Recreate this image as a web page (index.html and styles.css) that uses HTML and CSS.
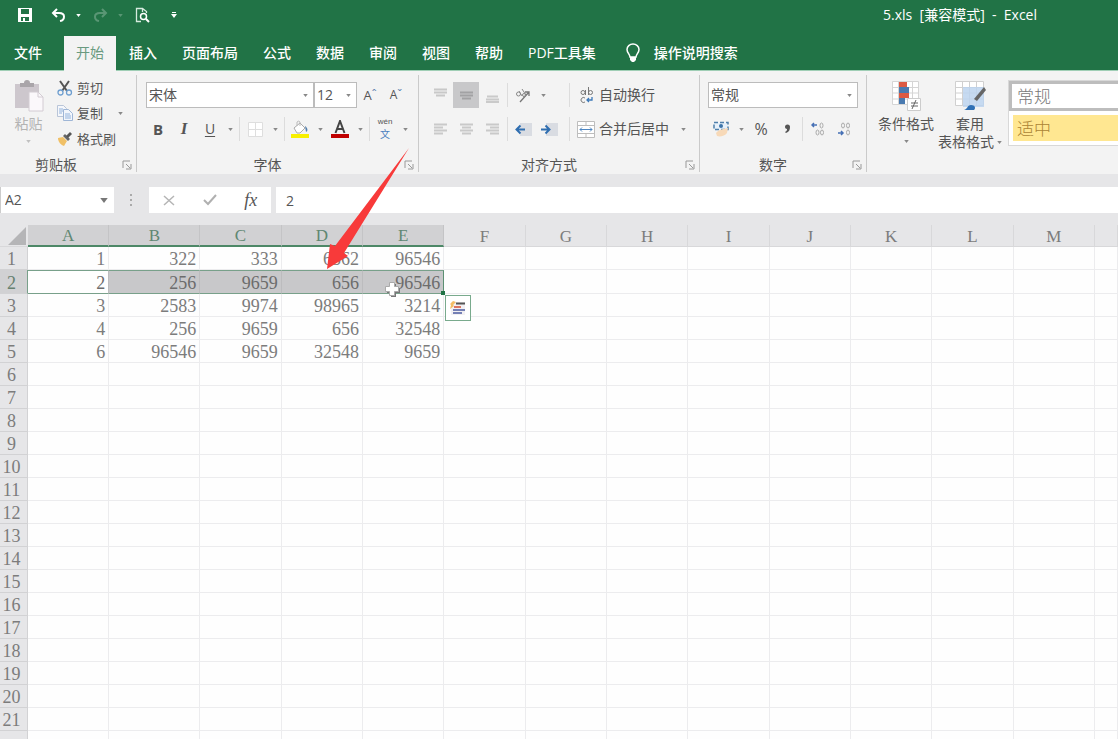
FILE: index.html
```html
<!DOCTYPE html>
<html lang="zh-CN">
<head>
<meta charset="utf-8">
<title>5.xls [兼容模式] - Excel</title>
<link rel="stylesheet" href="styles.css">
</head>
<body>
<svg class="defs" width="0" height="0" aria-hidden="true">
  <symbol id="caret" viewBox="0 0 6 4"><path d="M0 0h6L3 4z" fill="currentColor"/></symbol>
  <symbol id="launcher" viewBox="0 0 10 10"><path d="M1 8V1h7M4 4l4 4M9 4v5H4" fill="none" stroke="currentColor"/></symbol>
</svg>

<header class="titlebar">
  <div class="quick">
    <button class="tool" aria-label="保存"><svg width="14" height="14" viewBox="0 0 14 14"><path d="M0 0h14v14H0z" fill="#fff"/><path d="M3 1h8v5H3zM3 9h8v4H3z" fill="#217346"/><path d="M5 10h2v3H5z" fill="#fff"/></svg></button>
    <div class="split undo"><button class="tool" aria-label="撤消"><svg width="15" height="14" viewBox="0 0 15 14"><path d="M6 1L2 5l4 4M2 5h6c7 0 6 7 1 8" fill="none" stroke="#fff" stroke-width="2"/></svg></button><button class="drop" aria-label="撤消选项"><svg width="5" height="3"><use href="#caret"/></svg></button></div>
    <div class="split dim"><button class="tool" aria-label="重做"><svg width="15" height="14" viewBox="0 0 15 14"><path d="M9 1l4 4-4 4M13 5H7C0 5 1 12 6 13" fill="none" stroke="#fff" stroke-width="2"/></svg></button><button class="drop" aria-label="重做选项"><svg width="5" height="3"><use href="#caret"/></svg></button></div>
    <button class="tool" aria-label="打印预览"><svg width="15" height="16" viewBox="0 0 15 16"><path d="M6 14.500H1.500V1.500h6l4 3V6M7.500 1.500V5" fill="none" stroke="#d6ebdf" stroke-width="1.300"/><circle cx="8.500" cy="9.500" r="3" fill="none" stroke="#fff" stroke-width="1.500"/><path d="M11 12l3 3" stroke="#fff" stroke-width="2"/></svg></button>
    <button class="drop customize" aria-label="自定义快速访问工具栏"><svg width="6" height="6" viewBox="0 0 6 6"><path d="M1 0h4v1H1zM0 2h6L3 6z" fill="#fff"/></svg></button>
  </div>
  <h1 class="title">5.xls  [兼容模式]  -  Excel</h1>
</header>

<nav class="tabs">
  <button class="tab file">文件</button>
  <button class="tab active">开始</button>
  <button class="tab">插入</button>
  <button class="tab">页面布局</button>
  <button class="tab">公式</button>
  <button class="tab">数据</button>
  <button class="tab">审阅</button>
  <button class="tab">视图</button>
  <button class="tab">帮助</button>
  <button class="tab">PDF工具集</button>
  <button class="tell"><svg width="14" height="20" viewBox="0 0 14 20"><path d="M4 14c0-3-3-4-3-7.500a6 5.500 0 0 1 12 0C13 10 10 11 10 14z" fill="none" stroke="#fff" stroke-width="1.500"/><path d="M4 14h6v3l-2 2H6l-2-2z" fill="#fff"/></svg>操作说明搜索</button>
</nav>

<section class="ribbon">
  <div class="group clipboard">
    <div class="clip-body">
      <button class="big paste">
        <svg width="30" height="32" viewBox="0 0 30 32"><path d="M1 4h24v24H1z" fill="#cdc7cd"/><path d="M6 3h4a3 3 0 0 1 6 0h4v4H6z" fill="#a9a5a9"/><path d="M15 12h9l5 5v14H15z" fill="#fbf8fb" stroke="#d3ccd3"/><path d="M24 12v5h5" fill="none" stroke="#d3ccd3"/></svg>
        <span>粘贴</span>
        <svg width="5" height="3"><use href="#caret"/></svg>
      </button>
      <div class="stack">
        <button class="cmd"><svg width="16" height="16" viewBox="0 0 16 16"><path d="M3 1l7 10M12 1L5 11" stroke="#555" stroke-width="2"/><circle cx="3.500" cy="12.500" r="2.500" fill="none" stroke="#6f9fd0" stroke-width="1.300"/><circle cx="12" cy="12.500" r="2.500" fill="none" stroke="#6f9fd0" stroke-width="1.300"/></svg>剪切</button>
        <div class="split"><button class="cmd"><svg width="16" height="16" viewBox="0 0 16 16"><path d="M.5.500h6l3 3v8h-9z" fill="#f5f7fb" stroke="#b9c5d8"/><path d="M6.500 4.500h5l4 4v7h-9z" fill="#f2f6fc" stroke="#9fb6d6"/><path d="M8 9h5M8 11h6M8 13h6M2 4h4M2 6h4M2 8h3" stroke="#93b3dc"/></svg>复制</button><button class="drop" aria-label="复制选项"><svg width="5" height="3"><use href="#caret"/></svg></button></div>
        <button class="cmd"><svg width="16" height="16" viewBox="0 0 16 16"><path d="M1 7l5-1 4 4-3 5c-3-1-6-4-6-8z" fill="#f0c067"/><path d="M6 5l5 5 2-2-5-5z" fill="#666"/><path d="M9 5l4-4 2 2-4 4z" fill="#555"/></svg>格式刷</button>
      </div>
    </div>
    <div class="group-label">剪贴板<button class="launch" aria-label="剪贴板设置"><svg width="10" height="10"><use href="#launcher"/></svg></button></div>
  </div>

  <div class="group font">
    <div class="rows">
      <div class="row">
        <span class="combo name"><select aria-label="字体"><option>宋体</option></select><svg width="5" height="3"><use href="#caret"/></svg></span>
        <span class="combo size"><select aria-label="字号"><option>12</option></select><svg width="5" height="3"><use href="#caret"/></svg></span>
        <button class="tool grow" aria-label="增大字号">A<sup>ˆ</sup></button>
        <button class="tool shrink" aria-label="减小字号">A<sup>ˇ</sup></button>
      </div>
      <div class="row">
        <button class="tool bold">B</button><button class="tool italic">I</button><button class="tool underline">U</button><button class="drop" aria-label="下划线选项"><svg width="5" height="3"><use href="#caret"/></svg></button>
        <i class="sep"></i>
        <button class="tool" aria-label="边框"><svg width="15" height="15" viewBox="0 0 15 15"><path d="M.5.500h14v14H.5zM7.500 0v15M0 7.500h15" fill="#fff" stroke="#dedede"/></svg></button><button class="drop" aria-label="边框选项"><svg width="5" height="3"><use href="#caret"/></svg></button>
        <i class="sep"></i>
        <button class="tool" aria-label="填充颜色"><svg width="18" height="18" viewBox="0 0 18 18"><path d="M3 8l6-5 5 5-5 5H6z" fill="#fff" stroke="#aaa"/><path d="M6 6V2a2 2 0 0 1 3 0v4" fill="none" stroke="#bbb"/><path d="M14 6c3 2 3 5 1 6z" fill="#527fae"/><path d="M0 14h18v4H0z" fill="#f8f000"/></svg></button><button class="drop" aria-label="填充颜色选项"><svg width="5" height="3"><use href="#caret"/></svg></button>
        <button class="tool" aria-label="字体颜色"><svg width="18" height="18" viewBox="0 0 18 18"><path d="M4.500 13L9 1l4.500 12M6 9h6" fill="none" stroke="#444" stroke-width="2"/><path d="M0 14h18v4H0z" fill="#c00000"/></svg></button><button class="drop" aria-label="字体颜色选项"><svg width="5" height="3"><use href="#caret"/></svg></button>
        <i class="sep"></i>
        <button class="tool phonetic" aria-label="显示拼音"><small>wén</small><b>文</b></button><button class="drop" aria-label="拼音选项"><svg width="5" height="3"><use href="#caret"/></svg></button>
      </div>
    </div>
    <div class="group-label">字体<button class="launch" aria-label="字体设置"><svg width="10" height="10"><use href="#launcher"/></svg></button></div>
  </div>

  <div class="group align">
    <div class="rows">
      <div class="row">
        <button class="tool" aria-label="顶端对齐"><svg width="13" height="15" viewBox="0 0 13 15"><path d="M0 1.500h13M0 4.500h13M2 7.500h9" stroke="#c8c8c8" stroke-width="2"/></svg></button><button class="tool pressed" aria-label="垂直居中"><svg width="13" height="15" viewBox="0 0 13 15"><path d="M0 4.500h13M0 7.500h13M2 10.500h9" stroke="#a2a2a4" stroke-width="2"/></svg></button><button class="tool" aria-label="底端对齐"><svg width="13" height="15" viewBox="0 0 13 15"><path d="M1 8.500h11M0 11.500h13M0 14h13" stroke="#cacaca" stroke-width="2"/></svg></button>
        <i class="sep"></i>
        <span class="pair"><button class="tool" aria-label="方向"><svg width="17" height="15" viewBox="0 0 17 15"><path d="M5 14L14 4M10 4h4v4" fill="none" stroke="#777" stroke-width="1.300"/><circle cx="3.500" cy="6" r="2" fill="none" stroke="#888"/><path d="M4 3l3 5M7 1l4 6" stroke="#888"/><circle cx="9" cy="7" r="1.500" fill="none" stroke="#888"/></svg></button><button class="drop" aria-label="方向选项"><svg width="5" height="3"><use href="#caret"/></svg></button></span>
        <i class="sep wide"></i>
        <button class="cmd wrap"><svg width="20" height="17" viewBox="0 0 20 17"><circle cx="7" cy="5.500" r="2" fill="none" stroke="#777"/><path d="M9.500 3v5M12.500 0v8" stroke="#777"/><circle cx="14.500" cy="5.500" r="2" fill="none" stroke="#777"/><path d="M9 11a2.500 2.500 0 1 0 0 4" fill="none" stroke="#777"/><path d="M16 10v3h-5m2-2l-2 2 2 2" fill="none" stroke="#3d79b8" stroke-width="1.300"/></svg>自动换行</button>
      </div>
      <div class="row">
        <button class="tool" aria-label="左对齐"><svg width="13" height="13" viewBox="0 0 13 13"><path d="M0 1.500h13M0 4.500h9M0 7.500h13M0 10.500h9" stroke="#c9c9c9" stroke-width="2"/></svg></button><button class="tool" aria-label="居中"><svg width="13" height="13" viewBox="0 0 13 13"><path d="M0 1.500h13M2 4.500h9M0 7.500h13M2 10.500h9" stroke="#c9c9c9" stroke-width="2"/></svg></button><button class="tool" aria-label="右对齐"><svg width="13" height="13" viewBox="0 0 13 13"><path d="M0 1.500h13M4 4.500h9M0 7.500h13M4 10.500h9" stroke="#c9c9c9" stroke-width="2"/></svg></button>
        <i class="sep"></i>
        <span class="pair"><button class="tool" aria-label="减少缩进量"><svg width="17" height="13" viewBox="0 0 17 13"><path d="M5 0h12v13H5z" fill="#d9dce2"/><path d="M10 6.500H2M5.500 2.500l-4 4 4 4" fill="none" stroke="#2f6eb0" stroke-width="2"/></svg></button><button class="tool" aria-label="增加缩进量"><svg width="17" height="13" viewBox="0 0 17 13"><path d="M5 0h12v13H5z" fill="#d9dce2"/><path d="M0 6.500h8M4.500 2.500l4 4-4 4" fill="none" stroke="#2f6eb0" stroke-width="2"/></svg></button></span>
        <i class="sep wide"></i>
        <button class="cmd merge"><svg width="20" height="17" viewBox="0 0 20 17"><path d="M1.500.500h17v16h-17zM1 4.500h18M1 12.500h18M10 0v4M10 13v4" fill="#fff" stroke="#bdbdbd"/><path d="M4 8.500h12M6 6.500l-2 2 2 2M14 6.500l2 2-2 2" fill="none" stroke="#4d86c2"/></svg>合并后居中</button><button class="drop" aria-label="合并选项"><svg width="5" height="3"><use href="#caret"/></svg></button>
      </div>
    </div>
    <div class="group-label">对齐方式<button class="launch" aria-label="对齐设置"><svg width="10" height="10"><use href="#launcher"/></svg></button></div>
  </div>

  <div class="group number">
    <div class="rows">
      <div class="row"><span class="combo format"><select aria-label="数字格式"><option>常规</option></select><svg width="5" height="3"><use href="#caret"/></svg></span></div>
      <div class="row">
        <button class="tool" aria-label="会计数字格式"><svg width="17" height="16" viewBox="0 0 17 16"><path d="M1 1.500h14v7H1z" fill="#e6f0fa" stroke="#4f7fab" stroke-width="1.500" stroke-dasharray="4 2"/><circle cx="8" cy="5" r="2" fill="#3d73a8"/><path d="M3 12c3-4 8-4 12-5l-1 5c-2 3-7 4-10 3z" fill="#f7d9b8"/></svg></button><button class="drop" aria-label="会计格式选项"><svg width="5" height="3"><use href="#caret"/></svg></button><button class="tool percent">%</button><button class="tool comma" aria-label="千位分隔样式"><svg width="7" height="11" viewBox="0 0 7 11"><path d="M1 3a2.500 2.500 0 1 1 5 0c0 3-1 5-4 6l-1-1c2-1 2-2 2-3-1 0-2-1-2-2z" fill="#555"/></svg></button>
        <i class="sep"></i>
        <button class="tool" aria-label="增加小数位数"><svg width="14" height="14" viewBox="0 0 14 14"><path d="M6 3H1M3 1L1 3l2 2" fill="none" stroke="#4670b5" stroke-width="1.500"/><g fill="none" stroke="#aaa"><ellipse cx="10.500" cy="3.500" rx="1.500" ry="2.500"/><ellipse cx="6.500" cy="10.500" rx="1.500" ry="2.500"/><ellipse cx="11" cy="10.500" rx="1.500" ry="2.500"/></g></svg></button><button class="tool" aria-label="减少小数位数"><svg width="14" height="14" viewBox="0 0 14 14"><path d="M1 11h5M4 9l2 2-2 2" fill="none" stroke="#4670b5" stroke-width="1.500"/><g fill="none" stroke="#aaa"><ellipse cx="6" cy="3.500" rx="1.500" ry="2.500"/><ellipse cx="11" cy="3.500" rx="1.500" ry="2.500"/><ellipse cx="11" cy="10.500" rx="1.500" ry="2.500"/></g></svg></button>
      </div>
    </div>
    <div class="group-label">数字<button class="launch" aria-label="数字设置"><svg width="10" height="10"><use href="#launcher"/></svg></button></div>
  </div>

  <div class="group styles">
    <button class="big">
      <svg width="30" height="32" viewBox="0 0 30 32"><path d="M1.500 1.500h26v23h-26zM1 7.500h27M1 13h27M1 19h27M7.500 1v24M21.500 1v24" fill="#fff" stroke="#d5d5d5"/><path d="M8 2h8v5H8zM8 13h10v5H8z" fill="#dd5a43"/><path d="M8 7h10v6H8zM8 18h6v6H8z" fill="#4a7ab0"/><path d="M16.500 18.500h13v12h-13z" fill="#fff" stroke="#ccc"/><path d="M20 23h7M20 26h7M25 20l-4 9" stroke="#666"/></svg>
      <span>条件格式</span>
      <svg width="5" height="3"><use href="#caret"/></svg>
    </button>
    <button class="big">
      <svg width="32" height="32" viewBox="0 0 32 32"><path d="M1.500 1.500h28v24h-28zM1 7.500h29M1 13h29M1 19h29M8.500 1v25M15.500 1v25M22.500 1v25" fill="#fff" stroke="#d0d0d0"/><path d="M9 7h21v20H9z" fill="#bcd3ee" opacity=".85"/><path d="M30 7l2 3-9 11-3-2z" fill="#666"/><path d="M10 30c4-1 3-5 7-5s5 3 3 5z" fill="#2f70b5"/></svg>
      <span>套用</span>
      <span class="with-caret">表格格式<svg width="5" height="3"><use href="#caret"/></svg></span>
    </button>
    <div class="gallery">
      <button class="style normal">常规</button>
      <button class="style neutral">适中</button>
    </div>
  </div>
</section>

<section class="formula">
  <div class="namebox"><input aria-label="名称框" value="A2"><button class="drop" aria-label="名称列表"><svg width="8" height="5"><use href="#caret"/></svg></button></div>
  <svg class="dots" width="3" height="12" viewBox="0 0 3 12"><path d="M0 0h2v2H0zM0 5h2v2H0zM0 10h2v2H0z" fill="#aaa"/></svg>
  <div class="fx">
    <button aria-label="取消"><svg width="12" height="11" viewBox="0 0 12 11"><path d="M1 1l10 9M11 1L1 10" stroke="#b5b5b5" stroke-width="1.500"/></svg></button>
    <button aria-label="输入"><svg width="14" height="12" viewBox="0 0 14 12"><path d="M1 6l4 4 8-9" fill="none" stroke="#b0b0b0" stroke-width="2"/></svg></button>
    <button class="fn">fx</button>
  </div>
  <input class="content" aria-label="编辑栏" value="2">
</section>

<main class="sheet">
  <table class="grid">
    <colgroup><col class="c-head"><col><col class="c-b"><col><col><col><col><col><col><col><col><col><col><col><col class="c-last"></colgroup>
    <thead><tr><th class="corner"><svg width="18" height="18" viewBox="0 0 18 18"><path d="M18 0v18H0z" fill="#b5b5b7"/></svg></th><th class="on">A</th><th class="on">B</th><th class="on">C</th><th class="on">D</th><th class="on">E</th><th>F</th><th>G</th><th>H</th><th>I</th><th>J</th><th>K</th><th>L</th><th>M</th><th></th></tr></thead>
    <tbody id="rows">
      <tr><th>1</th><td>1</td><td>322</td><td>333</td><td>6562</td><td>96546</td><td></td><td></td><td></td><td></td><td></td><td></td><td></td><td></td><td></td></tr>
      <tr class="selected"><th>2</th><td class="sel active-cell">2</td><td class="sel">256</td><td class="sel">9659</td><td class="sel">656</td><td class="sel last">96546<i class="handle"></i>
        <svg class="cursor" width="17" height="17" viewBox="0 0 17 17"><path d="M7 3h5v4h4v5h-4v4H7v-4H3V7h4z" fill="#777"/><path d="M5.500 1.500h5v4h4v5h-4v4h-5v-4h-4v-5h4z" fill="#fff" stroke="#aaa"/></svg>
        <button class="quick-analysis" aria-label="快速分析"><svg width="16" height="15" viewBox="0 0 16 15"><path d="M1 1h14v13H1z" fill="#f2f0f3"/><path d="M6 2.500h9" stroke="#555" stroke-width="2"/><path d="M4 6h7" stroke="#dc7661" stroke-width="2"/><path d="M3 9h12M3 12h9" stroke="#7580b5" stroke-width="2"/><path d="M3 0l3 1-3 3 1 1-4 3 1-4-1-1z" fill="#f4bd65"/></svg></button></td><td></td><td></td><td></td><td></td><td></td><td></td><td></td><td></td><td></td></tr>
      <tr><th>3</th><td>3</td><td>2583</td><td>9974</td><td>98965</td><td>3214</td><td></td><td></td><td></td><td></td><td></td><td></td><td></td><td></td><td></td></tr>
      <tr><th>4</th><td>4</td><td>256</td><td>9659</td><td>656</td><td>32548</td><td></td><td></td><td></td><td></td><td></td><td></td><td></td><td></td><td></td></tr>
      <tr><th>5</th><td>6</td><td>96546</td><td>9659</td><td>32548</td><td>9659</td><td></td><td></td><td></td><td></td><td></td><td></td><td></td><td></td><td></td></tr>
    </tbody>
  </table>
</main>

<svg class="pointer" width="84" height="122" viewBox="0 0 84 122" aria-hidden="true"><path d="M83 0L18 105l4 3L1 121 4 96l5 2z" fill="#f83a3a"/></svg>
<script src="script.js"></script>
</body>
</html>
```
FILE: styles.css
```css
* { box-sizing: border-box; }
body {
  margin: 0;
  height: 100vh;
  display: flex;
  flex-direction: column;
  position: relative;
  overflow: hidden;
  background: #e6e6e8;
  color: #555;
  font: 14px/18px "Open Sans", "Noto Sans CJK SC", sans-serif;
}
button, input, select { font: inherit; color: inherit; border: 0; padding: 0; margin: 0; background: none; }
button { display: flex; align-items: center; justify-content: center; white-space: nowrap; }
svg { flex: none; display: block; }
.defs { position: absolute; }

.titlebar { display: flex; justify-content: space-between; align-items: center; height: 32px; padding: 0 81px 2px 12px; background: #217346; color: #fff; flex: none; }
.quick { display: flex; align-items: center; gap: 2px; }
.undo { padding-left: 5px; }
.dim { opacity: .25; }
.customize { margin-left: 10px; }
.title { margin: 0; font-size: 14px; font-weight: 400; white-space: pre; }
.split { display: flex; align-items: center; }
.tool { width: 26px; height: 26px; flex: none; }
.drop { width: 14px; height: 26px; flex: none; }
.ribbon .drop { color: #888; }

.tabs { display: flex; gap: 1px; height: 39px; flex: none; padding-top: 4px; background: #217346; border-bottom: 1px solid #9fceb5; color: #fff; font-weight: 500; }
.tab { padding: 0 12px; height: 34px; }
.file { padding: 0 14px; margin-right: 7px; }
.tab.active { height: 35px; padding-bottom: 1px; background: #f3f3f3; color: #6a9a80; font-weight: 400; }
.tell { height: 34px; gap: 14px; padding-left: 17px; }

.ribbon { display: flex; flex: none; background: #f3f3f3; padding: 4px 0 2px; overflow: hidden; }
.group { display: flex; flex-direction: column; justify-content: space-between; height: 97px; border-right: 1px solid #cacaca; flex: none; padding: 7px 8px 0; }
.group.clipboard { width: 137px; padding: 0; }
.group.font { width: 282px; }
.group.align { width: 281px; }
.group.number { width: 167px; }
.group.styles { flex: 1 1 0; min-width: 0; flex-direction: row; justify-content: flex-start; border: 0; padding: 5px 0 0 7px; }
.group-label { position: relative; height: 14px; line-height: 14px; text-align: center; padding-right: 20px; }
.clipboard .group-label { padding-right: 24px; }
.launch { position: absolute; right: -4px; top: 2px; color: #999; }
.clipboard .launch { right: 4px; }
.rows { display: flex; flex-direction: column; gap: 8px; }
.row { display: flex; align-items: center; height: 26px; }
.sep { width: 5px; height: 24px; flex: none; background: linear-gradient(#dcdcdc, #dcdcdc) center / 1px 100% no-repeat; }
.sep.wide { width: 14px; }
.pair { display: flex; width: 52px; }
.cmd { gap: 4px; height: 25px; }
.wrap, .merge { gap: 3px; }
.merge + .drop { margin-left: 7px; }

.clip-body { display: flex; }
.big { flex-direction: column; justify-content: flex-start; width: 64px; height: 72px; flex: none; }
.big svg { color: #888; }
.big svg + span { margin-top: 3px; }
.big span + svg { margin-top: 7px; }
.paste { width: 57px; padding-top: 5px; color: #b3b3b3; height: 78px; }
.paste svg { color: #c0c0c0; }
.stack { display: flex; flex-direction: column; align-items: flex-start; font-size: 13px; }
.stack .drop { margin-left: 10px; }
.with-caret { display: flex; align-items: center; gap: 3px; }

.combo { position: relative; height: 26px; border: 1px solid #bcbcbc; background: #fff; }
.combo select { width: 100%; height: 24px; padding-left: 2px; appearance: none; }
.combo svg { position: absolute; right: 5px; top: 11px; color: #888; pointer-events: none; }
.combo.name { width: 168px; margin-left: 1px; }
.combo.size { width: 43px; }
.combo.format { width: 150px; }
.grow { font-size: 13px; }
.shrink { font-size: 12px; }
.tool sup { font-size: 12px; line-height: 8px; color: #5c7fae; }
.bold { font-weight: 700; font-size: 15px; }
.italic { font: italic 700 17px "Liberation Serif", serif; }
.underline { text-decoration: underline; text-underline-offset: 2px; }
.phonetic { flex-direction: column; }
.phonetic small { font: 8px/9px "Liberation Sans", sans-serif; }
.phonetic b { font: 10px/15px "Noto Sans CJK SC", sans-serif; color: #4a7fc0; }
.pressed { background: #c8c8ca; }
.percent { font-size: 16px; }

.gallery { flex: 1 1 0; min-width: 0; margin-left: 6px; height: 66px; background: #fff; border: solid #d8d8d8; border-width: 1px 0 1px 1px; display: flex; flex-direction: column; gap: 4px; overflow: hidden; }
.style { justify-content: flex-start; height: 30px; font: 300 17px/24px "Noto Sans CJK SC", sans-serif; color: #777; }
.style.normal { border: 3px solid #bdbdbd; border-right: 0; padding-left: 5px; }
.style.neutral { height: 26px; margin-left: 4px; padding-left: 4px; background: #ffe791; color: #ab8435; }

.formula { display: flex; align-items: center; flex: none; height: 51px; padding: 13px 0 12px; }
.namebox { display: flex; width: 114px; height: 26px; background: #fff; border-left: 1px solid #ccc; }
.namebox input { flex: 1; min-width: 0; padding-left: 4px; }
.namebox .drop { width: 20px; color: #777; }
.dots { margin: 0 16px; }
.fx { display: flex; width: 122px; height: 26px; background: #fff; margin-right: 5px; }
.fx button { flex: 1; }
.fn { font: italic 18px "Liberation Serif", serif; }
.content { flex: 1; min-width: 0; height: 26px; background: #fff; padding-left: 10px; }

.sheet { flex: 1; min-height: 0; overflow: hidden; }
.grid { width: 100%; table-layout: fixed; border-collapse: separate; border-spacing: 0; background: #fefefe; font: 18px/19px "Liberation Serif", serif; color: #7c7c7c; }
.c-head { width: 28px; }
.c-b { width: 91px; }
.c-last { width: 23px; }
.grid th, .grid td { height: 23px; padding: 3px 3px 0; border: solid #ececee; border-width: 0 1px 1px 0; text-align: right; font-weight: 400; white-space: nowrap; }
.grid th { background: #e6e6e8; border-color: #d2d2d4; color: #7c7c7c; text-align: center; }
.grid tbody th { padding: 3px 4px 0 0; }
.grid thead th { height: 22px; padding: 2px 0 0; border-color: #d8d8da; font-size: 17px; line-height: 18px; }
.grid thead th.on { background: #d1d1d3; border-right-color: #c4c4c6; border-bottom: 2px solid #4d8867; color: #5f8772; }
.grid thead .corner { padding: 0; border-right: 0; }
.corner svg { margin-left: 8px; }
.grid .selected th { background: #d1d1d3; color: #66806f; border-right-color: #78a08a; }
.grid .selected th, .grid .selected td { height: 24px; }
.grid td.sel { background: #c8c8ca; border-top: 1px solid #78a08a; border-bottom-color: #78a08a; border-right-color: #bcbcbe; color: #6c6c6c; }
.grid td.active-cell { background: #fefefe; }
.grid td.last { position: relative; border-right-color: #5c9073; }
.handle { position: absolute; right: -2px; bottom: -2px; width: 4px; height: 4px; background: #217346; }
.cursor { position: absolute; left: 21px; top: 10px; }
.quick-analysis { position: absolute; left: 100%; top: 100%; margin: 2px; width: 26px; height: 26px; background: #fff; border: 1px solid #79aa8d; }

.pointer { position: absolute; left: 326px; top: 148px; pointer-events: none; }
```
FILE: script.js
```js
const body = document.getElementById('rows');
const LAST_NUMBERED = 21;

for (let n = 6; n <= LAST_NUMBERED + 1; n++) {
  const tr = document.createElement('tr');
  const th = document.createElement('th');
  th.textContent = n <= LAST_NUMBERED ? n : '';
  tr.append(th);
  for (let c = 0; c < 14; c++) tr.append(document.createElement('td'));
  body.append(tr);
}
```
